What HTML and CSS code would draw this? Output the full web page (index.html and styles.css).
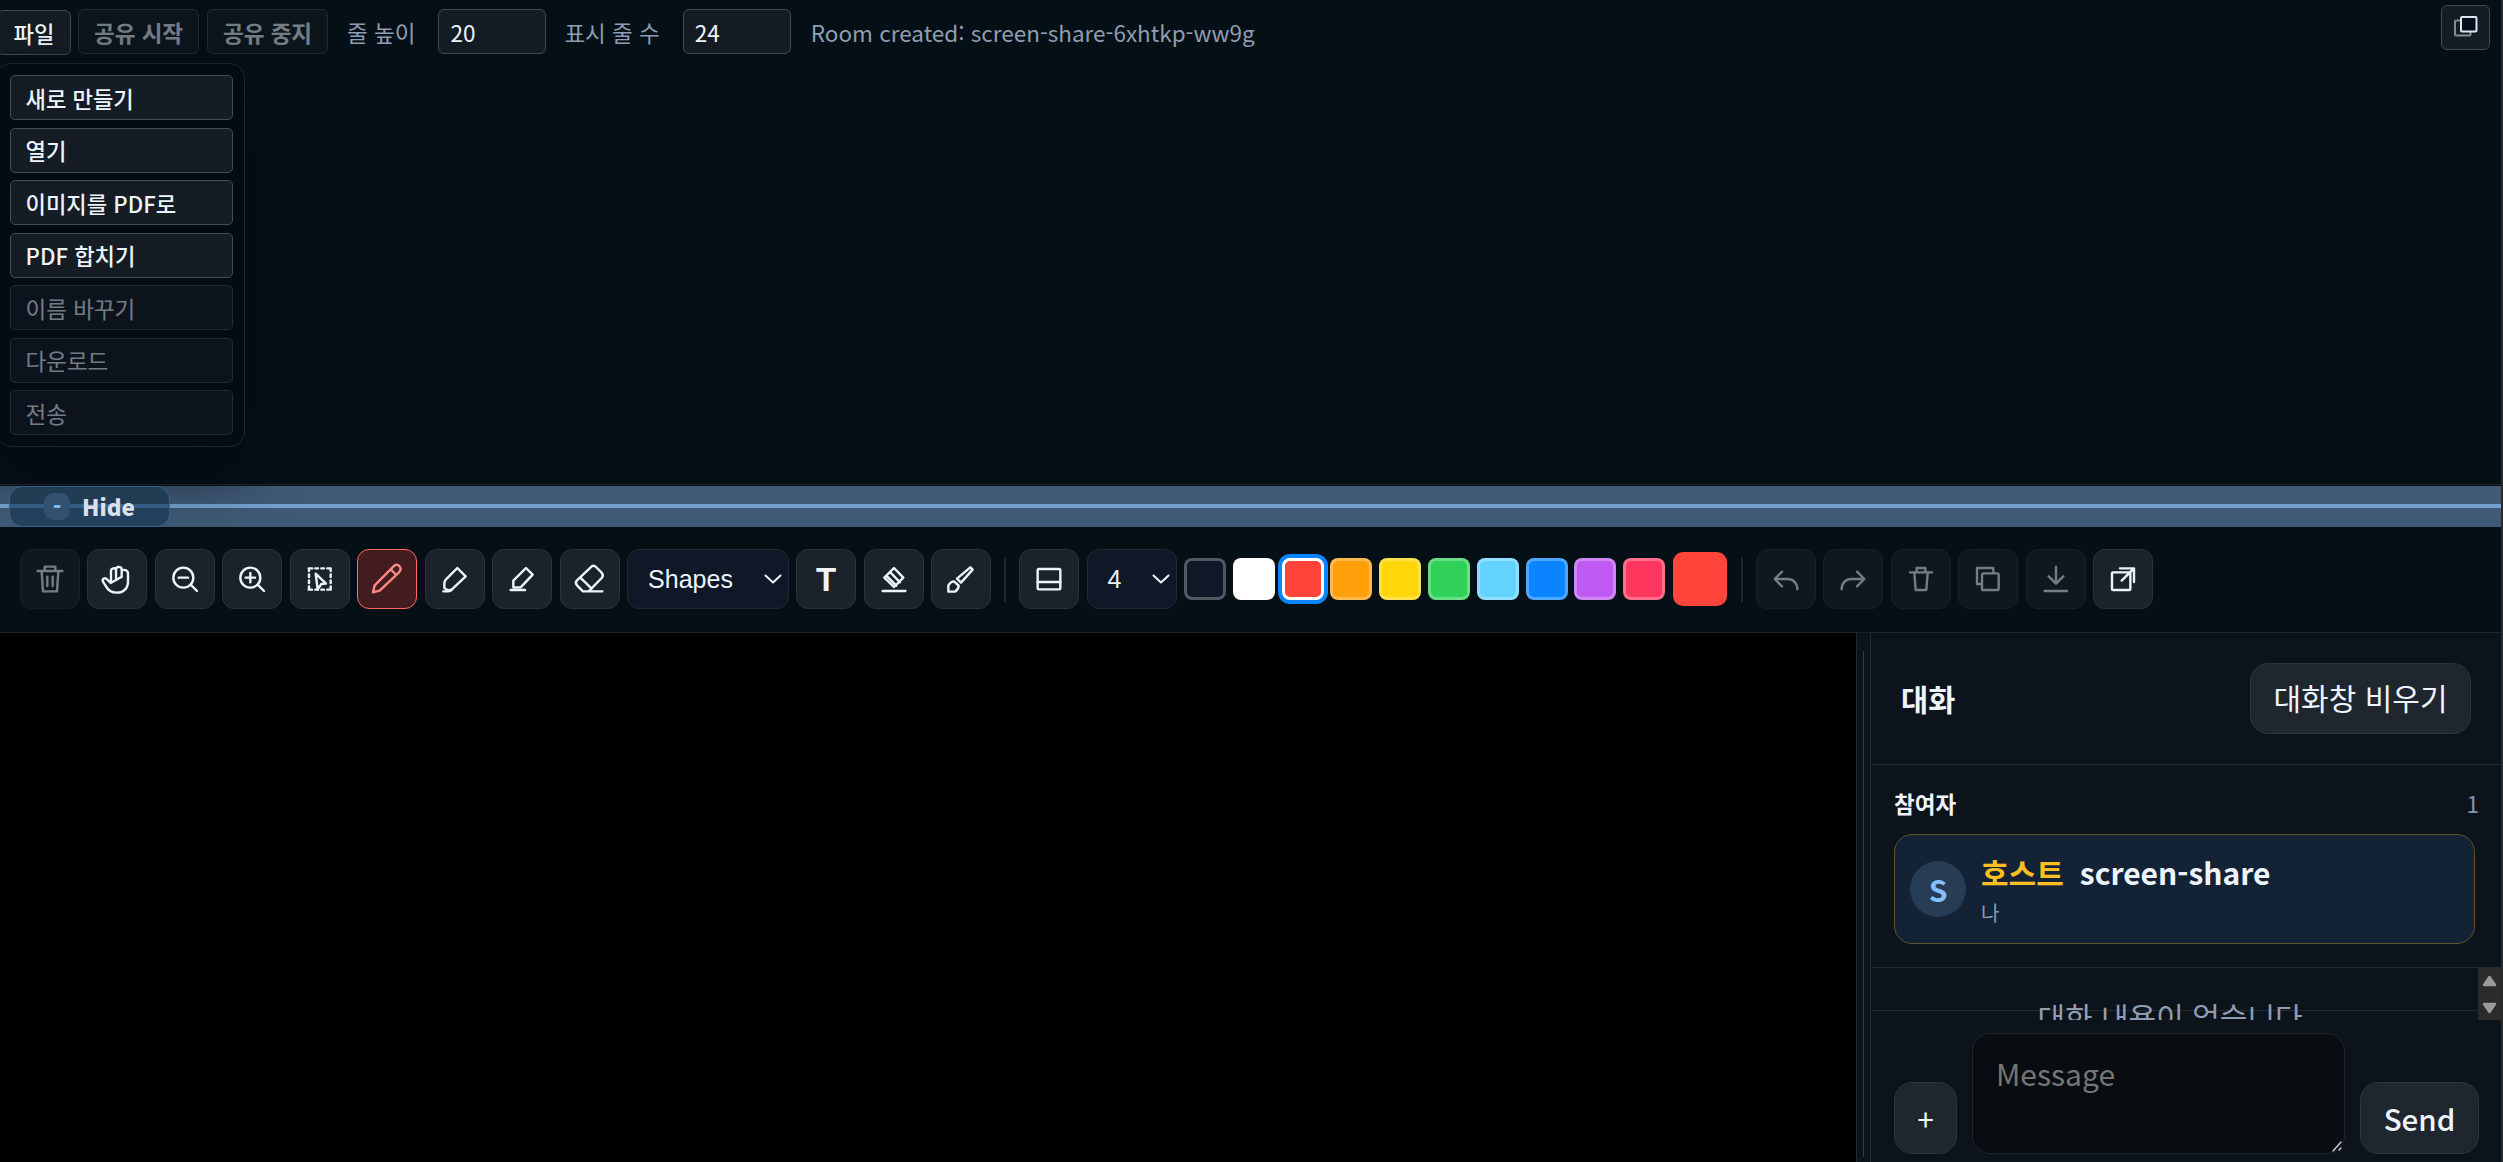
FILE: index.html
```html
<!DOCTYPE html>
<html lang="ko">
<head>
<meta charset="utf-8">
<title>screen-share</title>
<link rel="stylesheet" href="styles.css">
</head>
<body>
<div class="app">
  <header class="topbar">
    <div class="file">
      <button class="btn btn-file">파일</button>
      <div class="menu">
        <button class="item">새로 만들기</button>
        <button class="item">열기</button>
        <button class="item">이미지를 PDF로</button>
        <button class="item">PDF 합치기</button>
        <button class="item off">이름 바꾸기</button>
        <button class="item off">다운로드</button>
        <button class="item off">전송</button>
      </div>
    </div>
    <button class="btn share off">공유 시작</button>
    <button class="btn share off">공유 중지</button>
    <label class="field height">줄 높이 <span class="num">20</span></label>
    <label class="field">표시 줄 수 <span class="num">24</span></label>
    <span class="status">Room created: screen-share-6xhtkp-ww9g</span>
    <button class="btn popout"><svg width="24" height="22" viewBox="0 0 24 22"><rect x="1" y="4.5" width="15.5" height="15" rx="1" class="back"/><rect x="7" y="1" width="15.5" height="14.5" rx="1" class="front"/></svg></button>
  </header>
  <main class="stage"></main>
  <div class="hidebar"><div class="rail"></div><button class="hide"><span class="dash">-</span>Hide</button></div>
  <nav class="tools">
    <button class="tool off"><svg viewBox="0 0 180 180"><path d="M53 66H127M74 65V53H106V65M65 67L69 127H111L115 67M82 83V111M98 83V111"/></svg></button>
    <button class="tool"><svg viewBox="0 0 180 180"><path d="M72 100V66C72 56 86 56 87 62M87 88V62C87 51 104 51 104 62V84M104 66C109 60 123 62 123 74V98C123 119 108 131 89 131C72 131 63 123 57 112L48 98C44 90 54 84 60 91L71 102L103 84"/></svg></button>
    <button class="tool"><svg viewBox="0 0 180 180"><circle cx="85" cy="86" r="30"/><path d="M107 107L126 126M71 86H99"/></svg></button>
    <button class="tool"><svg viewBox="0 0 180 180"><circle cx="85" cy="86" r="30"/><path d="M107 107L126 126M71 86H99M85 72V100"/></svg></button>
    <button class="tool"><svg viewBox="0 0 180 180"><path d="M56 58H67M76 58H84M94 58H102M112 58H122M56 122H66M76 122H84M94 122H102M112 122H122M57 58V66M57 76V84M57 94V102M57 112V122M122 58V66M122 76V84M122 94V102M122 112V122"/><path d="M77 74L108 104L94 105L83 121Z"/></svg></button>
    <button class="tool active"><svg viewBox="0 0 180 180"><path d="M48 130L53 109L109 53Q118 43 127 51Q135 60 126 70L68 125ZM101 61L118 78"/></svg></button>
    <button class="tool"><svg viewBox="0 0 180 180"><path d="M97 57L122 82L84 118C76 125 65 124 58 117V104Q58 96 63 91ZM55 127H69Q78 127 83 119"/></svg></button>
    <button class="tool"><svg viewBox="0 0 180 180"><path d="M102 57L122 77L86 115H64V95ZM56 123H99"/></svg></button>
    <button class="tool"><svg viewBox="0 0 180 180"><path d="M92 55Q100 46 108 54L125 71Q132 79 125 87L86 127H69L51 109Q44 101 51 94ZM61 86L95 119M84 127H127"/></svg></button>
    <div class="select shapes">Shapes<svg class="chev" viewBox="0 0 18 10"><path d="M1.5 1.5L9 8.5L16.5 1.5"/></svg></div>
    <button class="tool letter">T</button>
    <button class="tool"><svg viewBox="0 0 180 180"><path d="M90 57L118 86L90 114L61 86ZM78 69L108 100M67 80L97 110M56 126H124"/></svg></button>
    <button class="tool"><svg viewBox="0 0 180 180"><path d="M118 55L125 62L90 101L78 89ZM52 128V110Q59 97 69 97L83 110Q83 120 72 128Z"/></svg></button>
    <i class="sep"></i>
    <button class="tool"><svg viewBox="0 0 180 180"><rect x="56" y="60" width="68" height="61" rx="4"/><path d="M56 99H124"/></svg></button>
    <div class="select size">4<svg class="chev" viewBox="0 0 18 10"><path d="M1.5 1.5L9 8.5L16.5 1.5"/></svg></div>
    <div class="swatches">
      <i class="sw navy"></i><i class="sw white"></i><i class="sw red picked"></i><i class="sw orange"></i><i class="sw yellow"></i><i class="sw green"></i><i class="sw sky"></i><i class="sw blue"></i><i class="sw purple"></i><i class="sw pink"></i>
    </div>
    <i class="current"></i>
    <i class="sep"></i>
    <button class="tool off"><svg viewBox="0 0 180 180"><path d="M78 68L56 90L78 112M57 90H94C112 90 124 102 124 121"/></svg></button>
    <button class="tool off"><svg viewBox="0 0 180 180"><path d="M102 68L124 90L102 112M123 90H86C68 90 56 102 56 121"/></svg></button>
    <button class="tool off"><svg viewBox="0 0 180 180"><path d="M57 70H123M77 69V57H103V69M70 71L74 123H106L110 71"/></svg></button>
    <button class="tool off"><svg viewBox="0 0 180 180"><rect x="72" y="73" width="50" height="50" rx="4"/><path d="M69 105H57V57H106V70"/></svg></button>
    <button class="tool off"><svg viewBox="0 0 180 180"><path d="M90 53V103M68 82L90 104L112 82M56 126H123"/></svg></button>
    <button class="tool"><svg viewBox="0 0 180 180"><rect x="57" y="70" width="55" height="53" rx="3"/><path d="M81 58H123V99M86 95L122 59"/></svg></button>
  </nav>
  <section class="work">
    <div class="canvas"></div>
    <div class="splitter"></div>
    <aside class="chat">
      <div class="chat-head"><h2>대화</h2><button class="soft">대화창 비우기</button></div>
      <div class="people">
        <div class="people-head"><b>참여자</b><span>1</span></div>
        <div class="card">
          <div class="avatar">S</div>
          <div class="who">
            <div class="name"><span class="host">호스트</span><span>screen-share</span></div>
            <div class="me">나</div>
          </div>
        </div>
      </div>
      <div class="log"><p>대화 내용이 없습니다</p>
        <div class="scroll"><svg viewBox="0 0 23 52"><path d="M11.5 9L17 17H6ZM6 36H17L11.5 44Z"/></svg></div>
      </div>
      <div class="composer">
        <button class="soft plus">+</button>
        <div class="input">Message<svg class="grip" viewBox="0 0 10 12"><path d="M1 11L9 2M7 10L9 8"/></svg></div>
        <button class="soft send">Send</button>
      </div>
    </aside>
  </section>
</div>
</body>
</html>
```
FILE: styles.css
```css
* { box-sizing: border-box; }
body {
  margin: 0;
  background: #051016;
  color: #edf4fc;
  font: 22.5px/33px "Noto Sans CJK KR", sans-serif;
  overflow: hidden;
}
button {
  margin: 0;
  padding: 0;
  color: inherit;
  font: inherit;
}
.app {
  display: flex;
  flex-direction: column;
  height: 1162px;
  border-right: 2px solid #292929;
  position: relative;
}
svg { fill: none; stroke: currentColor; stroke-linecap: round; stroke-linejoin: round; }

.topbar { display: flex; height: 60px; padding-top: 9px; flex: none; }
.btn {
  height: 45px;
  padding-top: 1px;
  border: 1px solid #434a50;
  border-radius: 6px;
  background: #151c23;
}
.btn-file { width: 74px; margin: 1px 0 0 -3px; font-size: 22.2px; font-weight: 500; }
.btn-file, .item { display: block; }
.share { width: 121px; margin-left: 7px; font-weight: 700; }
.share + .share { margin-left: 8px; }
.off { opacity: 0.48; }
.field { display: flex; align-items: center; height: 45px; margin-left: 18px; padding-top: 1px; gap: 23px; color: #8f9db3; }
.field.height { margin-left: 19px; }
.num {
  width: 108px;
  height: 45px;
  margin-top: -1px;
  padding: 6px 11px;
  border: 1px solid #434a50;
  border-radius: 6px;
  background: #151b23;
  color: #edf4fc;
}
.status { margin: 7px 0 0 20px; color: #8f9db3; }
.popout { width: 49px; margin: -4px 11px 0 auto; padding: 0; }
.popout svg { display: block; margin: -1px auto 0; stroke-width: 2; }
.back { stroke: #858b90; }
.front { fill: #060f19; stroke: #dde5ee; }

.file { position: relative; width: 71px; }
.menu {
  position: absolute;
  z-index: 2;
  top: 54px;
  left: -4px;
  width: 249px;
  height: 384px;
  padding: 11px 11px 0 13px;
  display: flex;
  flex-direction: column;
  gap: 7.5px;
  border: 1px solid #1c242c;
  border-radius: 15px;
  background: #050b15;
  box-shadow: 0 27px 60px rgba(4, 7, 16, 0.6);
}
.item {
  height: 45px;
  flex: none;
  padding: 1px 0 0 14.5px;
  border: 1px solid #464c52;
  border-radius: 5px;
  background: #151c24;
  text-align: left;
  font-size: 22.2px;
  font-weight: 500;
}
.item.off { font-size: 22.5px; font-weight: 400; }

.stage { flex: none; height: 424px; }
.hidebar {
  position: relative;
  flex: none;
  height: 43px;
  border-top: 1px solid #1f272d;
  background: linear-gradient(#071017 1px, #405a75 1px);
}
.rail { height: 4px; margin-top: 19px; background: #72a1d1; }
.hide {
  position: absolute;
  z-index: 3;
  left: 9px;
  top: 1px;
  width: 161px;
  height: 41px;
  display: flex;
  align-items: center;
  gap: 12px;
  padding: 0 0 0 34px;
  border: 1px solid #37618a;
  border-radius: 13px;
  background: linear-gradient(#213d54 17px, #335d82 17px, #335d82 21px, #23415c 21px);
  color: #d8e0ea;
  font-weight: 900;
}
.dash {
  width: 26px;
  height: 27px;
  margin: -1px 0 0;
  border-radius: 9px;
  background: #31516f;
  color: #86baf2;
  line-height: 25px;
  text-align: center;
}

.tools {
  display: flex;
  align-items: center;
  flex: none;
  height: 106px;
  padding: 0 0 1px 19.6px;
  gap: 7.5px;
  border-bottom: 1px solid #1c262f;
  font-family: "Liberation Sans", sans-serif;
}
.tool {
  display: flex;
  align-items: center;
  justify-content: center;
  flex: none;
  width: 60px;
  height: 60px;
  border: 1px solid #2b3338;
  border-radius: 12px;
  background: #1b2229;
}
.tool svg { flex: none; width: 60px; height: 60px; stroke-width: 7.2; }
.tool.active { border-color: #ff6961; background: #421c1f; color: #ff8880; }
.letter { font-size: 33px; font-weight: 700; }
.select {
  display: flex;
  align-items: center;
  justify-content: space-between;
  flex: none;
  height: 60px;
  padding: 0 6px 0 20px;
  border: 1px solid #1f2a33;
  border-radius: 12px;
  background: #101726;
  font-size: 25px;
}
.shapes { width: 161.5px; }
.size { width: 90px; }
.chev { width: 18px; height: 10px; stroke-width: 2; }
.sep { flex: none; width: 2px; height: 45px; margin: 0 5.5px; background: #1c262d; }
.swatches { display: flex; gap: 6.8px; }
.sw { width: 42px; height: 42px; border: 3px solid rgba(255, 255, 255, 0.28); border-radius: 8px; }
.navy { background: #101726; }
.white { background: #fff; }
.red { background: #ff453a; }
.orange { background: #ff9f0a; }
.yellow { background: #ffd60a; }
.green { background: #30d158; }
.sky { background: #64d2ff; }
.blue { background: #0a84ff; }
.purple { background: #bf5af2; }
.pink { background: #ff375f; }
.picked { border-color: #fff; box-shadow: 0 0 0 4px #0a84ff; }
.current { flex: none; width: 54px; height: 54px; margin-right: 1.2px; border-radius: 10px; background: #ff453a; }

.work { display: flex; flex: 1; min-height: 0; }
.canvas { flex: 1; background: #000; }
.splitter {
  width: 15px;
  border: solid #212932;
  border-width: 0 1px;
  background: linear-gradient(#2d3f52, #2d3f52) 6px 18px / 1px 506px no-repeat #0d131b;
}
.chat { display: flex; flex-direction: column; width: 630px; background: #0d131a; }
.chat-head {
  display: flex;
  justify-content: space-between;
  align-items: center;
  flex: none;
  height: 132px;
  padding: 0 30px;
  border-bottom: 1px solid #222a30;
}
h2 { margin: -2px 0 0; font-size: 29.5px; line-height: 42px; font-weight: 700; }
.soft {
  height: 71px;
  border: 1px solid #2e3439;
  border-radius: 18px;
  background: #20262d;
  font-size: 30px;
}
.chat-head .soft { width: 221px; padding-bottom: 2px; }
.people { flex: none; height: 203px; padding: 22px 23px 0; border-bottom: 1px solid #222a30; }
.people-head { display: flex; justify-content: space-between; height: 47px; }
.people-head span { margin-right: -1px; color: #8295ac; }
.card {
  display: flex;
  align-items: center;
  gap: 15px;
  width: 581px;
  height: 110px;
  padding-left: 15px;
  border: 1px solid #635127;
  border-radius: 18px;
  background: #132235;
}
.avatar {
  width: 56px;
  height: 56px;
  border-radius: 50%;
  background: #273d56;
  color: #86bfff;
  font-size: 30px;
  line-height: 56px;
  font-weight: 700;
  text-align: center;
}
.name { display: flex; gap: 16px; font-size: 30px; line-height: 42px; font-weight: 700; }
.host { color: #fbbf24; }
.me { color: #8c9bb0; font-size: 20px; line-height: 30px; margin-top: 5px; }
.log { position: relative; z-index: 1; height: 52px; flex: none; overflow: hidden; margin-bottom: -10px; }
.log p { margin: 27px 32px 0 0; color: #8f9db3; text-align: center; font-size: 30px; line-height: 42px; }
.scroll { position: absolute; right: 0; top: 0; width: 23px; height: 52px; background: #2b2b2b; }
.scroll svg { display: block; width: 23px; height: 52px; fill: #9b9b9b; stroke: #9b9b9b; stroke-width: 2.5; }
.composer {
  display: flex;
  flex: none;
  align-items: flex-end;
  gap: 15px;
  height: 144px;
  padding: 0 22px 0 23px;
  border-top: 1px solid #222a30;
}
.soft.plus, .soft.send { height: 72px; }
.plus { width: 63px; }
.input {
  position: relative;
  width: 373px;
  height: 121px;
  padding: 17px 23px;
  border: 1px solid #1e2529;
  border-radius: 18px;
  background: #080d11;
  color: #757575;
  font-size: 30px;
  line-height: 44px;
}
.grip { position: absolute; right: 2px; bottom: 1px; width: 10px; height: 12px; color: #c8c8c8; stroke-width: 1.5; }
.send { width: 119px; font-size: 29.5px; font-weight: 500; }
```
